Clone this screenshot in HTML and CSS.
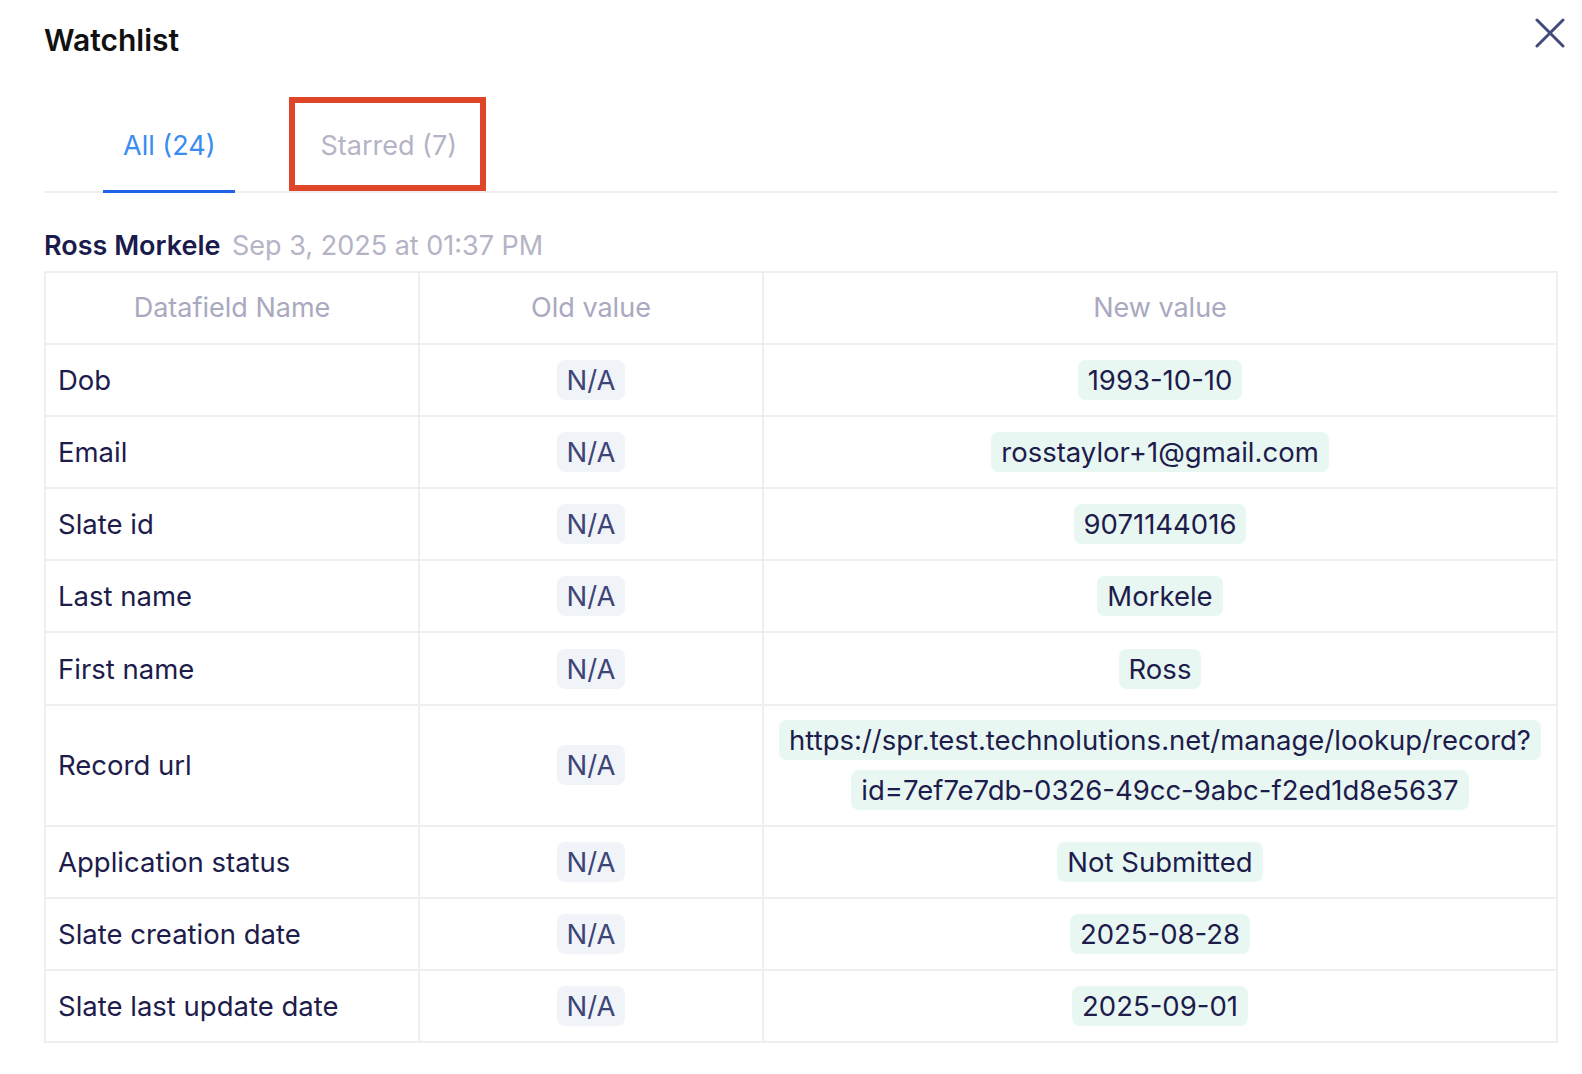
FILE: index.html
```html
<!DOCTYPE html>
<html lang="en">
<head>
<meta charset="utf-8">
<title>Watchlist</title>
<link rel="stylesheet" href="styles.css">
</head>
<body>
<div class="panel">
  <div class="header">
    <h1 class="title">Watchlist</h1>
    <button class="close" aria-label="Close">
      <svg width="30" height="30" viewBox="0 0 30 30"><path d="M2 2 L28 28 M28 2 L2 28" stroke="#434b7a" stroke-width="3" stroke-linecap="round" fill="none"/></svg>
    </button>
  </div>
  <div class="tabs">
    <div class="tab active">All (24)</div>
    <div class="tab">Starred (7)<span class="highlight"></span></div>
  </div>
  <div class="entry-head">
    <span class="who">Ross Morkele</span>
    <span class="when">Sep 3, 2025 at 01:37 PM</span>
  </div>
  <table class="changes">
    <colgroup>
      <col class="c1"><col class="c2"><col class="c3">
    </colgroup>
    <thead>
      <tr><th>Datafield Name</th><th>Old value</th><th>New value</th></tr>
    </thead>
    <tbody>
      <tr><td class="name">Dob</td><td class="old"><span class="badge na">N/A</span></td><td class="new"><span class="badge nv">1993-10-10</span></td></tr>
      <tr><td class="name">Email</td><td class="old"><span class="badge na">N/A</span></td><td class="new"><span class="badge nv">rosstaylor+1@gmail.com</span></td></tr>
      <tr><td class="name">Slate id</td><td class="old"><span class="badge na">N/A</span></td><td class="new"><span class="badge nv">9071144016</span></td></tr>
      <tr><td class="name">Last name</td><td class="old"><span class="badge na">N/A</span></td><td class="new"><span class="badge nv">Morkele</span></td></tr>
      <tr><td class="name">First name</td><td class="old"><span class="badge na">N/A</span></td><td class="new"><span class="badge nv">Ross</span></td></tr>
      <tr class="tall"><td class="name">Record url</td><td class="old"><span class="badge na">N/A</span></td><td class="new url"><span class="badge nv">https://spr.test.technolutions.net/manage/lookup/record?<br>id=7ef7e7db-0326-49cc-9abc-f2ed1d8e5637</span></td></tr>
      <tr><td class="name">Application status</td><td class="old"><span class="badge na">N/A</span></td><td class="new"><span class="badge nv">Not Submitted</span></td></tr>
      <tr><td class="name">Slate creation date</td><td class="old"><span class="badge na">N/A</span></td><td class="new"><span class="badge nv">2025-08-28</span></td></tr>
      <tr><td class="name">Slate last update date</td><td class="old"><span class="badge na">N/A</span></td><td class="new"><span class="badge nv">2025-09-01</span></td></tr>
    </tbody>
  </table>
</div>
</body>
</html>
```
FILE: styles.css
```css
* { box-sizing: border-box; }
html { overflow: hidden; }
html, body { margin: 0; padding: 0; background: #ffffff; }
body {
  font-family: Inter, "Noto Sans", "Liberation Sans", sans-serif;
  color: #1d1c4b;
}
.panel {
  padding: 0 24px 0 44px;
}
.header {
  display: flex;
  justify-content: space-between;
  align-items: flex-start;
  height: 80px;
}
.title {
  margin: 0;
  font-size: 30px;
  font-weight: 600;
  line-height: 80px;
  color: #111111;
}
.close {
  margin: 18px -7px 0 0;
  padding: 0;
  border: 0;
  background: none;
  width: 30px;
  height: 30px;
  display: flex;
}
.tabs {
  margin-top: 21px;
  display: flex;
  gap: 65px;
  padding-left: 59px;
  border-bottom: 2px solid #eeeeef;
}
.tab {
  position: relative;
  height: 92px;
  margin-bottom: -2px;
  padding: 0 20px;
  display: flex;
  align-items: center;
  font-size: 27px;
  color: #b4b4c6;
  border-bottom: 3px solid transparent;
}
.tab.active {
  color: #3a8cf0;
  border-bottom-color: #1f62e8;
}
.highlight {
  position: absolute;
  left: -11px;
  right: -9px;
  top: -4px;
  bottom: -1px;
  border: 6px solid #de4529;
}
.entry-head {
  margin-top: 37px;
  line-height: 32px;
  font-size: 27px;
}
.who {
  font-weight: 600;
  color: #1b1a4c;
}
.when {
  margin-left: 4px;
  color: #b4b4c6;
}
.changes {
  margin-top: 9px;
  width: 100%;
  border-collapse: collapse;
  border: 2px solid #efeff2;
  table-layout: fixed;
}
.c1 { width: 374px; }
.c2 { width: 344px; }
.changes th, .changes td {
  border: 2px solid #efeff2;
  height: 72.1px;
  padding: 0 12px;
  font-weight: 400;
  line-height: 50px;
  vertical-align: middle;
  font-size: 27.5px;
}
.changes th {
  color: #a9a9c0;
  text-align: center;
  font-size: 27px;
}
.changes .name {
  text-align: left;
  color: #1d1c4b;
}
.changes .old, .changes .new {
  text-align: center;
}
.changes tr.tall td {
  height: 121.5px;
}
.changes .url {
  padding: 0 4px;
  white-space: nowrap;
}
.badge {
  padding: 3px 10px;
  border-radius: 8px;
  -webkit-box-decoration-break: clone;
  box-decoration-break: clone;
}
.badge.na {
  background: #f0f3f7;
  color: #3d4577;
}
.badge.nv {
  background: #e9f7f3;
  color: #1d1c4b;
}
```
